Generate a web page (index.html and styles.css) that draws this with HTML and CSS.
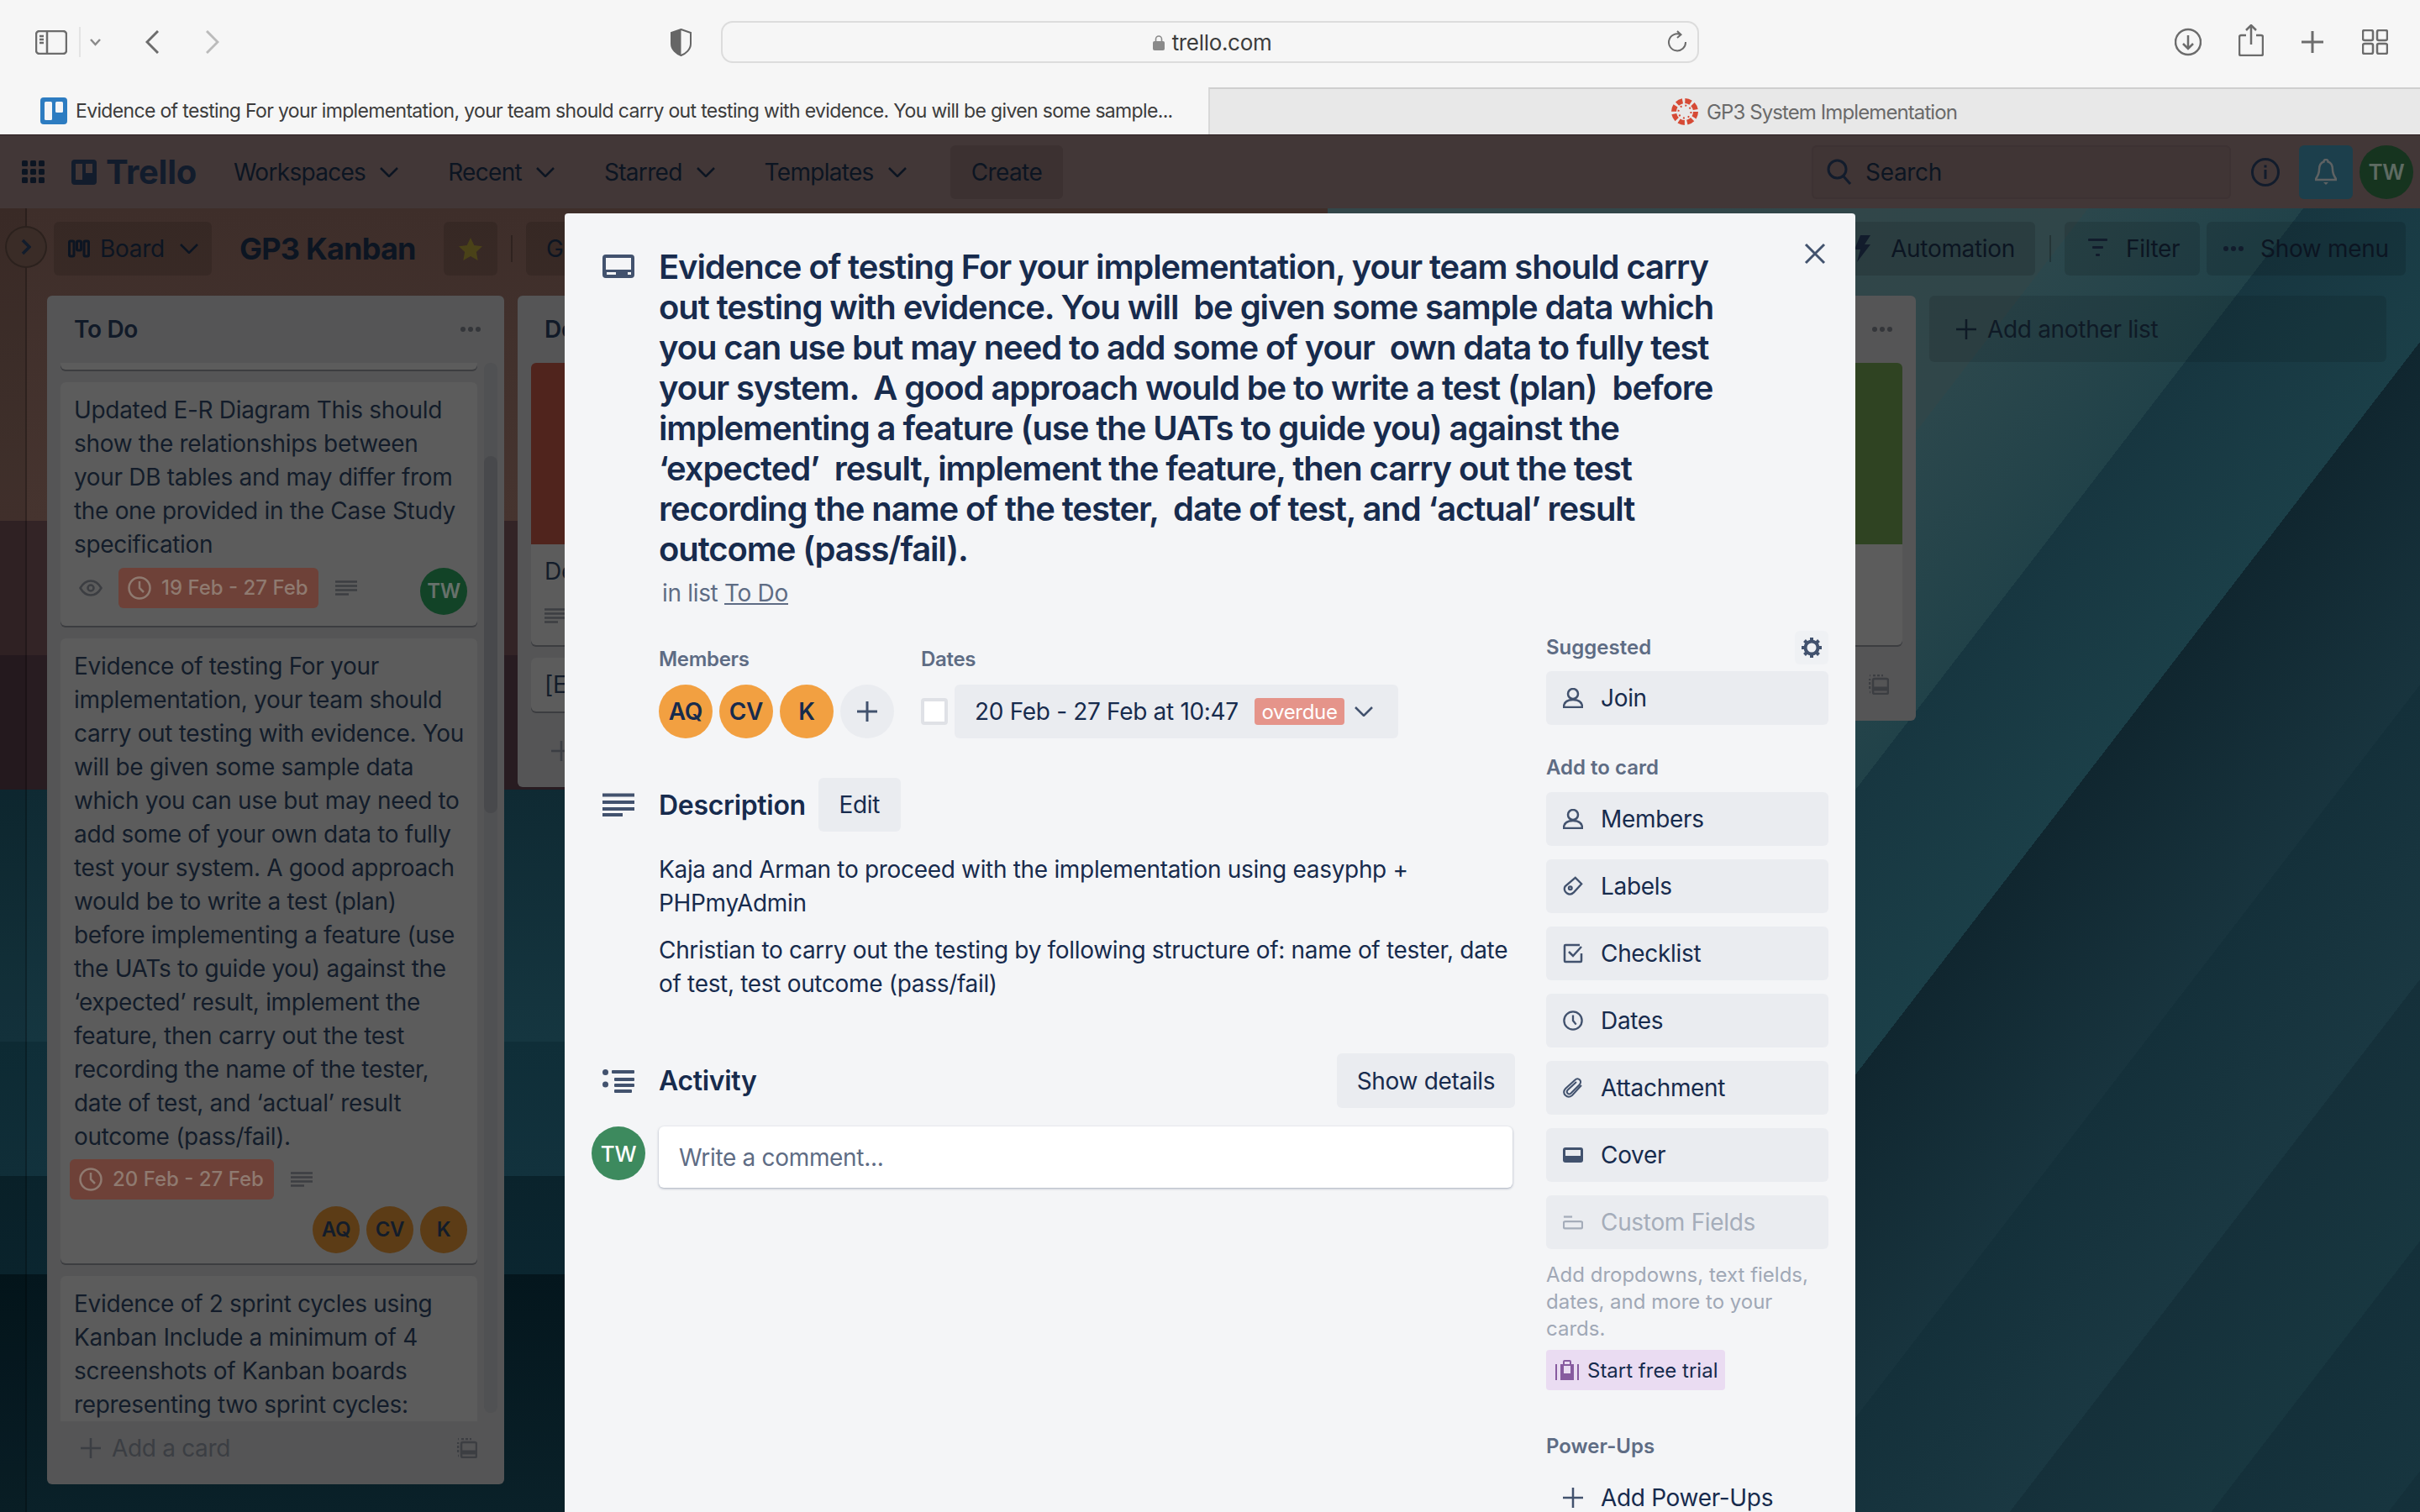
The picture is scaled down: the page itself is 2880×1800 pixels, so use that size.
FILE: index.html
```html
<!DOCTYPE html>
<html lang="en">
<head>
    <meta charset="UTF-8">
    <title>Evidence of testing | Trello</title>
    <link rel="stylesheet" href="styles.css">
</head>
<body>
    <!-- Safari toolbar -->
    <div class="toolbar">
        <svg class="ti ti-sidebar" viewBox="0 0 38 29"><rect x="1" y="1" width="36" height="27" rx="4"/><path d="M14 1v27M5 7h5M5 11h5M5 15h5"/></svg>
        <span class="ti-sep"></span>
        <svg class="ti ti-chev" viewBox="0 0 13 9"><path d="M1 1l5.5 6L12 1"/></svg>
        <svg class="ti ti-back" viewBox="0 0 16 28"><path d="M15 1L2 14l13 13"/></svg>
        <svg class="ti ti-forward" viewBox="0 0 16 28"><path d="M1 1l13 13L1 27"/></svg>
        <svg class="ti-shield" viewBox="0 0 27 33"><path d="M13.5 1L25 5v13c0 7-6 12-11.5 14C8 30 2 25 2 18V5z" fill="none" stroke="#666" stroke-width="2"/><path d="M13.5 1L2 5v13c0 7 6 12 11.5 14z" fill="#666"/></svg>
        <div class="urlbar">
            <svg class="lock" viewBox="0 0 14 19"><path d="M3.5 9V5.5a3.5 3.5 0 0 1 7 0V9" fill="none" stroke="#8a8a8a" stroke-width="1.6"/><rect y="8" width="14" height="11" rx="2" fill="#8a8a8a"/></svg>
            <span>trello.com</span>
            <svg class="ti ti-reload" viewBox="0 0 24 26"><path d="M15 5.2A10 10 0 1 0 21 14M11 1l4.5 4.2L11 9"/></svg>
        </div>
        <div class="toolbar-right">
            <svg class="ti ti-download" viewBox="0 0 32 34"><circle cx="16" cy="17" r="15"/><path d="M16 9v16M10 19l6 6 6-6"/></svg>
            <svg class="ti ti-share" viewBox="0 0 30 38"><path d="M9 13H3a2 2 0 0 0-2 2v20a2 2 0 0 0 2 2h24a2 2 0 0 0 2-2V15a2 2 0 0 0-2-2h-6M15 24V2M9 7l6-6 6 6"/></svg>
            <svg class="ti ti-plus" viewBox="0 0 28 28"><path d="M14 1v26M1 14h26"/></svg>
            <svg class="ti ti-tabs" viewBox="0 0 31 30"><rect x="1" y="1" width="12" height="12" rx="2"/><rect x="18" y="1" width="12" height="12" rx="2"/><rect x="1" y="17" width="12" height="12" rx="2"/><rect x="18" y="17" width="12" height="12" rx="2"/></svg>
        </div>
    </div>

    <div class="tabs">
        <div class="tab tab-active">
            <svg class="favicon" viewBox="0 0 32 32"><rect width="32" height="32" rx="4" fill="#2d7cc1"/><rect x="5" y="5" width="9" height="22" rx="1.5" fill="#f4f5f7"/><rect x="18" y="5" width="9" height="13" rx="1.5" fill="#f4f5f7"/></svg>
            <span>Evidence of testing For your implementation, your team should carry out testing with evidence. You will be given some sample...</span>
        </div>
        <div class="tab tab-other">
            <svg class="favicon" viewBox="0 0 32 32" fill="none" stroke="#d64a35"><circle cx="16" cy="16" r="13" stroke-width="6" stroke-dasharray="7.2 3"/><circle cx="16" cy="16" r="7.5" stroke-width="2" stroke-dasharray="2 3.9"/></svg>
            <span>GP3 System Implementation</span>
        </div>
    </div>

    <div class="app">
        <!-- Trello header -->
        <header class="topbar">
            <svg class="grid-icon" viewBox="0 0 27 27"><g fill="#0c1522"><rect width="7" height="7" rx="1.5"/><rect x="10" width="7" height="7" rx="1.5"/><rect x="20" width="7" height="7" rx="1.5"/><rect y="10" width="7" height="7" rx="1.5"/><rect x="10" y="10" width="7" height="7" rx="1.5"/><rect x="20" y="10" width="7" height="7" rx="1.5"/><rect y="20" width="7" height="7" rx="1.5"/><rect x="10" y="20" width="7" height="7" rx="1.5"/><rect x="20" y="20" width="7" height="7" rx="1.5"/></g></svg>
            <svg class="logo-mark" viewBox="0 0 30 30"><path fill="#121c2c" fill-rule="evenodd" d="M4 0h22a4 4 0 0 1 4 4v22a4 4 0 0 1-4 4H4a4 4 0 0 1-4-4V4a4 4 0 0 1 4-4zm1 5v19h8V5zm12 0v11h8V5z"/></svg>
            <span class="logo-text">Trello</span>
            <nav class="topnav">
                <span class="navitem">Workspaces <svg class="dn" viewBox="0 0 22 12"><path d="M1 1l10 10L21 1"/></svg></span>
                <span class="navitem">Recent <svg class="dn" viewBox="0 0 22 12"><path d="M1 1l10 10L21 1"/></svg></span>
                <span class="navitem">Starred <svg class="dn" viewBox="0 0 22 12"><path d="M1 1l10 10L21 1"/></svg></span>
                <span class="navitem">Templates <svg class="dn" viewBox="0 0 22 12"><path d="M1 1l10 10L21 1"/></svg></span>
            </nav>
            <span class="create-btn">Create</span>
            <div class="search">
                <svg class="search-icon" viewBox="0 0 30 32"><circle cx="12.5" cy="12.5" r="10.5"/><path d="M20 21l8 9"/></svg>
                <span>Search</span>
            </div>
            <svg class="info-icon" viewBox="0 0 34 34"><circle cx="17" cy="17" r="15.5" fill="none" stroke="#121c2c" stroke-width="3"/><rect x="15.5" y="14" width="3" height="11" fill="#121c2c"/><rect x="15.5" y="8.500" width="3" height="3" fill="#121c2c"/></svg>
            <span class="bell-btn"><svg viewBox="0 0 26 32"><path d="M13 1c1.500 0 2.500 1 2.500 2.500C20 5 21 9 21 13c0 5 2 8 4 11v1H1v-1c2-3 4-6 4-11 0-4 1-8 5.500-9.500C10.500 2 11.500 1 13 1z" fill="none" stroke="#5e6263" stroke-width="2.500"/><path d="M10 28h6l-3 3z" fill="#5e6263"/></svg></span>
            <span class="avatar-top">TW</span>
        </header>

        <div class="board">
            <div class="side-strip">
                <span class="side-toggle"><svg viewBox="0 0 12 20"><path d="M2 2l8 8-8 8" fill="none" stroke="#121c2c" stroke-width="3.500"/></svg></span>
            </div>
            <div class="board-main">
                <div class="boardbar">
                    <span class="bar-btn bar-board">
                        <svg class="board-icon" viewBox="0 0 26 26" fill="none" stroke="#0c1522" stroke-width="3"><rect x="1.500" y="4" width="5.500" height="18" rx="1.500"/><rect x="10.500" y="4" width="5" height="11" rx="1.500"/><rect x="19" y="4" width="5.500" height="18" rx="1.500"/></svg>
                        Board
                        <svg class="dn" viewBox="0 0 22 12"><path d="M1 1l10 10L21 1"/></svg>
                    </span>
                    <h1 class="board-title">GP3 Kanban</h1>
                    <span class="bar-btn bar-star"><svg viewBox="0 0 28 27"><path d="M14 0l4.300 9 9.700 1.200-7.100 6.700 1.800 10L14 22l-8.700 4.900 1.800-10L0 10.200 9.700 9z" fill="#4a4218"/></svg></span>
                    <span class="bar-sep"></span>
                    <span class="bar-btn bar-workspace">G</span>
                    <div class="bar-right">
                        <span class="bar-btn bar-auto">
                            <svg class="bolt" viewBox="0 0 22 32"><path d="M10 0h12l-7 11h7L6 32l4-15H3z" fill="#121c2c"/></svg>
                            Automation
                        </span>
                        <span class="bar-sep"></span>
                        <span class="bar-btn bar-filter">
                            <svg class="filter-icon" viewBox="0 0 23 24"><g fill="#121c2c"><rect width="23" height="3" rx="1"/><rect x="5" y="9" width="13" height="3" rx="1"/><rect x="9" y="18" width="5" height="3" rx="1"/></g></svg>
                            Filter
                        </span>
                        <span class="bar-btn bar-menu">
                            <span class="dots dots-bar"><i></i><i></i><i></i></span>
                            Show menu
                        </span>
                    </div>
                </div>

                <div class="lists">
                    <!-- To Do -->
                    <section class="list">
                        <div class="list-head"><span>To Do</span><span class="dots"><i></i><i></i><i></i></span></div>
                        <div class="list-body todo-body">
                            <div class="cards">
                                <div class="card card-tail"></div>
                                <div class="card">
                                    <p>Updated E-R Diagram This should show the relationships between your DB tables and may differ from the one provided in the Case Study specification</p>
                                    <div class="badges">
                                        <svg class="eye" viewBox="0 0 28 20" fill="none" stroke="#3c3e42" stroke-width="2.500"><path d="M1.500 10C5 4 9 1.500 14 1.500S23 4 26.500 10C23 16 19 18.500 14 18.500S5 16 1.500 10z"/><circle cx="14" cy="10" r="3.500"/></svg>
                                        <span class="due">
                                            <svg class="due-clock" viewBox="0 0 28 28"><circle cx="14" cy="14" r="12.500"/><path d="M14 6v8l5 5"/></svg>
                                            19 Feb - 27 Feb
                                        </span>
                                        <svg class="desc-badge" viewBox="0 0 26 18"><path d="M0 1.500h26M0 6.500h26M0 11.500h26M0 16.500h16"/></svg>
                                        <span class="card-avatar card-avatar-tw">TW</span>
                                    </div>
                                </div>
                                <div class="card">
                                    <p>Evidence of testing For your implementation, your team should carry out testing with evidence. You will be given some sample data which you can use but may need to add some of your own data to fully test your system. A good approach would be to write a test (plan) before implementing a feature (use the UATs to guide you) against the ‘expected’ result, implement the feature, then carry out the test recording the name of the tester, date of test, and ‘actual’ result outcome (pass/fail).</p>
                                    <div class="badges badges-tight">
                                        <span class="due">
                                            <svg class="due-clock" viewBox="0 0 28 28"><circle cx="14" cy="14" r="12.500"/><path d="M14 6v8l5 5"/></svg>
                                            20 Feb - 27 Feb
                                        </span>
                                        <svg class="desc-badge" viewBox="0 0 26 18"><path d="M0 1.500h26M0 6.500h26M0 11.500h26M0 16.500h16"/></svg>
                                    </div>
                                    <div class="card-members">
                                        <span class="card-avatar">AQ</span>
                                        <span class="card-avatar">CV</span>
                                        <span class="card-avatar">K</span>
                                    </div>
                                </div>
                                <div class="card card-last">
                                    <p>Evidence of 2 sprint cycles using Kanban Include a minimum of 4 screenshots of Kanban boards representing two sprint cycles:</p>
                                </div>
                            </div>
                            <div class="scroll-track"><div class="scroll-thumb"></div></div>
                        </div>
                        <div class="list-foot">
                            <span class="add-card"><svg class="plus" viewBox="0 0 24 24"><path d="M12 0v24M0 12h24"/></svg>Add a card</span>
                            <svg class="tpl-icon" viewBox="0 0 24 24" fill="none" stroke="#3c3e42" stroke-width="2.500"><path d="M1 17V5M5 1h12M1 1h1M1 21h1" stroke-dasharray="3 2"/><rect x="5" y="5" width="18" height="18" rx="2"/><path d="M5 17h18" stroke-width="5"/></svg>
                        </div>
                    </section>

                    <!-- Doing -->
                    <section class="list">
                        <div class="list-head"><span>Doing</span></div>
                        <div class="cards cards-full">
                            <div class="card card-cover">
                                <div class="cover cover-red"></div>
                                <p>De</p>
                                <svg class="desc-badge desc-cover" viewBox="0 0 26 18"><path d="M0 1.500h26M0 6.500h26M0 11.500h26M0 16.500h16"/></svg>
                            </div>
                            <div class="card card-short"><p>[E</p></div>
                        </div>
                        <div class="list-foot">
                            <span class="add-card"><svg class="plus" viewBox="0 0 24 24"><path d="M12 0v24M0 12h24"/></svg></span>
                        </div>
                    </section>

                    <!-- hidden behind the modal -->
                    <section class="list list-empty"></section>

                    <!-- Done -->
                    <section class="list">
                        <div class="list-head list-head-end"><span class="dots"><i></i><i></i><i></i></span></div>
                        <div class="cards cards-full">
                            <div class="card card-cover">
                                <div class="cover cover-green"></div>
                            </div>
                        </div>
                        <div class="list-foot list-foot-right">
                            <svg class="tpl-icon" viewBox="0 0 24 24" fill="none" stroke="#3c3e42" stroke-width="2.500"><path d="M1 17V5M5 1h12M1 1h1M1 21h1" stroke-dasharray="3 2"/><rect x="5" y="5" width="18" height="18" rx="2"/><path d="M5 17h18" stroke-width="5"/></svg>
                        </div>
                    </section>

                    <div class="add-list"><svg class="plus plus-dark" viewBox="0 0 24 24"><path d="M12 0v24M0 12h24"/></svg>Add another list</div>
                </div>
            </div>
        </div>

        <!-- Card detail -->
        <div class="modal">
            <svg class="close" viewBox="0 0 26 26"><path d="M2 2l22 22M24 2L2 24"/></svg>
            <div class="modal-head">
                <svg class="sec-icon cover-icon" viewBox="0 0 38 28"><path fill="#42526e" fill-rule="evenodd" d="M4 0h30a4 4 0 0 1 4 4v20a4 4 0 0 1-4 4H4a4 4 0 0 1-4-4V4a4 4 0 0 1 4-4zm0 4v14h30V4zm1 17v3h11v-3zm25 0v3h4v-3z"/></svg>
                <div>
                    <h2 class="card-title">Evidence of testing For your implementation, your team should carry<br>out testing with evidence. You will &nbsp;be given some sample data which<br>you can use but may need to add some of your &nbsp;own data to fully test<br>your system. &nbsp;A good approach would be to write a test (plan) &nbsp;before<br>implementing a feature (use the UATs to guide you) against the<br>‘expected’ &nbsp;result, implement the feature, then carry out the test<br>recording the name of the tester, &nbsp;date of test, and ‘actual’ result<br>outcome (pass/fail).</h2>
                    <p class="in-list">in list <u>To Do</u></p>
                </div>
            </div>

            <div class="modal-columns">
                <div class="modal-main">
                    <div class="meta">
                        <div class="meta-block">
                            <h3>Members</h3>
                            <div class="member-row">
                                <span class="member">AQ</span>
                                <span class="member">CV</span>
                                <span class="member">K</span>
                                <span class="member member-add"><svg class="plus plus-modal" viewBox="0 0 24 24"><path d="M12 0v24M0 12h24"/></svg></span>
                            </div>
                        </div>
                        <div class="meta-block">
                            <h3>Dates</h3>
                            <div class="date-row">
                                <span class="checkbox"></span>
                                <span class="date-btn">20 Feb - 27 Feb at 10:47 <span class="overdue">overdue</span><svg class="dn dn-date" viewBox="0 0 22 12"><path d="M1 1l10 10L21 1"/></svg></span>
                            </div>
                        </div>
                    </div>

                    <div class="section-head desc-head">
                        <svg class="sec-icon" viewBox="0 0 38 28"><path d="M0 2.500h38M0 11h38M0 19h38M0 26h24" stroke="#42526e" stroke-width="4"/></svg>
                        <h3 class="section-title">Description</h3>
                        <span class="btn-grey btn-edit">Edit</span>
                    </div>
                    <div class="desc-text">
                        <p>Kaja and Arman to proceed with the implementation using easyphp + PHPmyAdmin</p>
                        <p>Christian to carry out the testing by following structure of: name of tester, date of test, test outcome (pass/fail)</p>
                    </div>

                    <div class="section-head activity-head">
                        <svg class="sec-icon" viewBox="0 0 38 28"><g fill="#42526e"><circle cx="3.500" cy="3.500" r="3.500"/><circle cx="3.500" cy="18" r="3.500"/><rect x="11" y="1" width="27" height="4" rx="1"/><rect x="14" y="10" width="24" height="4" rx="1"/><rect x="14" y="17" width="24" height="4" rx="1"/><rect x="14" y="24" width="21" height="4" rx="1"/></g></svg>
                        <h3 class="section-title">Activity</h3>
                        <span class="btn-grey btn-details">Show details</span>
                    </div>
                    <div class="comment-row">
                        <span class="comment-avatar">TW</span>
                        <div class="comment-box">Write a comment...</div>
                    </div>
                </div>

                <aside class="modal-side">
                    <div class="side-label-row">
                        <h3>Suggested</h3>
                        <span class="gear"><svg viewBox="0 0 24 24"><circle cx="12" cy="12" r="7.500" fill="none" stroke="#42526e" stroke-width="4"/><path d="M12 0v5M12 19v5M0 12h5M19 12h5M3.500 3.500L7 7M17 17l3.500 3.500M20.500 3.500L17 7M7 17l-3.500 3.500" stroke="#42526e" stroke-width="4"/></svg></span>
                    </div>
                    <div class="side-btn">
                        <svg class="side-icon" viewBox="0 0 24 24"><circle cx="12" cy="7" r="6"/><path d="M1 23c0-6 4-9 11-9s11 3 11 9z"/></svg>Join
                    </div>

                    <h3 class="side-label">Add to card</h3>
                    <div class="side-group">
                        <div class="side-btn"><svg class="side-icon" viewBox="0 0 24 24"><circle cx="12" cy="7" r="6"/><path d="M1 23c0-6 4-9 11-9s11 3 11 9z"/></svg>Members</div>
                        <div class="side-btn"><svg class="side-icon" viewBox="0 0 26 26"><path d="M16 2l8 8-10 11c-3 3-6 3-9 1s-4-6-2-9z"/><circle cx="9.500" cy="15.500" r="2"/></svg>Labels</div>
                        <div class="side-btn"><svg class="side-icon" viewBox="0 0 24 24"><path d="M20 2H3a1 1 0 0 0-1 1v18a1 1 0 0 0 1 1h18a1 1 0 0 0 1-1V12M7 10l5 5 10-11"/></svg>Checklist</div>
                        <div class="side-btn"><svg class="side-icon" viewBox="0 0 26 26"><circle cx="13" cy="13" r="11.500"/><path d="M13 6v7l4 5"/></svg>Dates</div>
                        <div class="side-btn"><svg class="side-icon side-clip" viewBox="0 0 24 24"><path d="M22 9L11 21c-3 2.500-6 2-8 0s-2.500-5 0-8L14 3c2-2 4.500-2 6-.5s1.500 4-.5 6L9.500 18.500c-1.500 1.300-3 1-4 0s-1-2.500.3-4L16 5"/></svg>Attachment</div>
                        <div class="side-btn"><svg class="side-icon side-icon-fill" viewBox="0 0 24 18"><path fill-rule="evenodd" d="M3 0h18a3 3 0 0 1 3 3v12a3 3 0 0 1-3 3H3a3 3 0 0 1-3-3V3a3 3 0 0 1 3-3zm0 3v7h18V3z"/></svg>Cover</div>
                        <div class="side-btn side-btn-off"><svg class="side-icon" viewBox="0 0 26 18"><path d="M1 2h11"/><rect x="1" y="8" width="24" height="9" rx="2"/></svg>Custom Fields</div>
                    </div>
                    <p class="side-help">Add dropdowns, text fields, dates, and more to your cards.</p>
                    <span class="trial"><svg class="trial-icon" viewBox="0 0 28 24" fill="#875b9f"><path fill-rule="evenodd" d="M9 5V2a2 2 0 0 1 2-2h6a2 2 0 0 1 2 2v3h3v19H6V5zm2-3v3h6V2zm-1 5v9h8V7z"/><rect y="5" width="2" height="19"/><rect x="26" y="5" width="2" height="19"/></svg>Start free trial</span>

                    <h3 class="side-label side-label-power">Power-Ups</h3>
                    <div class="side-btn side-btn-plain"><svg class="side-icon side-plus" viewBox="0 0 24 24"><path d="M12 0v24M0 12h24"/></svg>Add Power-Ups</div>
                </aside>
            </div>
        </div>
    </div>
</body>
</html>
```

FILE: styles.css
```css
* {
    box-sizing: border-box;
}
html, body {
    margin: 0;
    height: 1800px;
    overflow: hidden;
}
body {
    font-family: Inter, 'Liberation Sans', sans-serif;
    font-size: 28px;
    letter-spacing: -0.32px;
    background-color: #f6f6f6;
    color: #172b4d;
}
p, h1, h2, h3 {
    margin: 0;
}

/* Safari chrome */
.toolbar {
    height: 104px;
    display: flex;
    align-items: center;
    padding: 0 38px 4px 42px;
    background-color: #f6f6f6;
}
.ti {
    fill: none;
    stroke: #6c6c6c;
    stroke-width: 2.5;
    flex: none;
}
.ti-sidebar { width: 38px; height: 29px; }
.ti-sep {
    width: 2px;
    height: 36px;
    margin-left: 14px;
    background-color: #e3e3e3;
}
.ti-chev { width: 13px; height: 9px; margin-left: 11px; stroke: #8a8a8a; }
.ti-back { width: 16px; height: 28px; margin-left: 53px; stroke-width: 3; }
.ti-forward { width: 16px; height: 28px; margin-left: 56px; stroke: #bbb; stroke-width: 3; }
.ti-shield { width: 27px; height: 33px; margin-left: 536px; flex: none; }
.urlbar {
    width: 1164px;
    height: 50px;
    margin-left: 34px;
    padding-left: 5px;
    display: flex;
    align-items: center;
    justify-content: center;
    position: relative;
    border: 2px solid #dcdcdc;
    border-radius: 14px;
    font-size: 26px;
    color: #3c3c3c;
}
.lock {
    width: 14px;
    height: 19px;
    margin-right: 9px;
}
.ti-reload {
    position: absolute;
    right: 11px;
    top: 9px;
    width: 24px;
    height: 26px;
    stroke-width: 2;
}
.toolbar-right {
    margin-left: auto;
    display: flex;
    align-items: center;
}
.ti-download { width: 32px; height: 34px; }
.ti-share { width: 30px; height: 38px; margin-left: 44px; margin-top: -4px; }
.ti-plus { width: 28px; height: 28px; margin-left: 44px; stroke-width: 3; }
.ti-tabs { width: 31px; height: 30px; margin-left: 45px; }

.tabs {
    height: 56px;
    display: flex;
    font-size: 24px;
}
.tab {
    display: flex;
    align-items: center;
}
.tab-active {
    width: 1438px;
    padding-left: 48px;
    color: #3c3c3c;
    background-color: #f6f6f6;
    white-space: nowrap;
    font-size: 23px;
    letter-spacing: -0.66px;
}
.tab-other {
    flex: 1;
    justify-content: center;
    padding-right: 2px;
    color: #6a6a6a;
    background-color: #e8e8e8;
    border-top: 2px solid #cfcfcf;
    border-left: 2px solid #d8d8d8;
    letter-spacing: -0.9px;
}
.favicon {
    width: 32px;
    height: 32px;
    margin-right: 10px;
    flex: none;
}

/* Trello page, everything is dimmed by the open card */
.app {
    height: 1640px;
    position: relative;
    overflow: hidden;
    border-top: 1px solid #2a1c1e;
}
.topbar {
    height: 87px;
    display: flex;
    align-items: center;
    padding: 0 8px 0 26px;
    background-color: #423737;
    color: #0c1522;
}
.grid-icon { width: 27px; height: 27px; flex: none; }
.logo-mark { width: 30px; height: 30px; margin-left: 32px; flex: none; }
.logo-text {
    margin-left: 11px;
    font-size: 40px;
    font-weight: 700;
    color: #121c2c;
}
.topnav {
    display: flex;
    margin-left: 44px;
    gap: 59px;
    letter-spacing: -0.7px;
}
.navitem {
    display: flex;
    align-items: center;
    gap: 17px;
    white-space: nowrap;
}
.dn {
    width: 22px;
    height: 12px;
    fill: none;
    stroke: #0c1522;
    stroke-width: 2.5;
    flex: none;
}
.create-btn {
    height: 64px;
    margin-left: 52px;
    padding: 0 25px;
    display: flex;
    align-items: center;
    border-radius: 6px;
    background-color: #3c3131;
    letter-spacing: -0.6px;
}
.search {
    width: 499px;
    height: 64px;
    margin-left: auto;
    padding-left: 16px;
    display: flex;
    align-items: center;
    gap: 16px;
    border: 2px solid #3d3233;
    border-radius: 6px;
    background-color: #403535;
}
.search-icon {
    width: 30px;
    height: 32px;
    fill: none;
    stroke: #121c2c;
    stroke-width: 3;
}
.info-icon { width: 34px; height: 34px; margin-left: 24px; flex: none; }
.bell-btn {
    width: 64px;
    height: 64px;
    margin-left: 23px;
    display: flex;
    align-items: center;
    justify-content: center;
    border-radius: 6px;
    background-color: #1c3f4c;
}
.bell-btn svg { width: 26px; height: 32px; }
.avatar-top {
    width: 64px;
    height: 64px;
    margin-left: 8px;
    display: flex;
    align-items: center;
    justify-content: center;
    border-radius: 50%;
    background-color: #16341f;
    color: #5e6b62;
    font-size: 26px;
    font-weight: 600;
}

.board {
    height: 1552px;
    display: flex;
    background-color: #0a2129;
    background-image:
        linear-gradient(127.6deg,
            #334649 0, #304649 717px,
            #2b474c 717px, #214249 920px,
            #173640 920px, #1b3f48 1127px,
            #10262f 1127px, #18343e 1376px,
            #14303a 1376px, #1a3842 1590px,
            #15303a 1590px, #183740 1780px,
            #14303a 1780px, #17353f 1947px,
            #14303a 1947px, #16323c 2200px),
        linear-gradient(to bottom,
            #3e2e2a 0, #46342f 372px,
            #332426 372px, #332426 532px,
            #281c21 532px, #281c21 692px,
            #0f2a33 692px, #153640 992px,
            #0f2e38 992px, #12323d 1152px,
            #0a232c 1152px, #0b2630 1269px,
            #04161d 1269px, #0a2129 1552px);
    background-size: 1300px 100%, 100% 100%;
    background-position: right top, left top;
    background-repeat: no-repeat;
}
.side-strip {
    width: 32px;
    flex: none;
    position: relative;
    border-right: 2px solid rgba(0, 0, 0, 0.25);
    background-color: rgba(0, 0, 0, 0.08);
}
.side-toggle {
    position: absolute;
    left: 6px;
    top: 21px;
    width: 50px;
    height: 50px;
    display: flex;
    align-items: center;
    justify-content: center;
    border: 2px solid rgba(0, 0, 0, 0.25);
    border-radius: 50%;
    background-color: #3a2c27;
}
.side-toggle svg { width: 12px; height: 20px; }
.board-main {
    flex: 1;
    min-width: 0;
}
.boardbar {
    height: 104px;
    padding: 16px 17px 24px 32px;
    display: flex;
    align-items: center;
    color: #0c1522;
}
.bar-btn {
    height: 64px;
    display: flex;
    align-items: center;
    border-radius: 6px;
    background-color: rgba(0, 0, 0, 0.12);
    white-space: nowrap;
}
.bar-board {
    width: 188px;
    padding-left: 17px;
    gap: 12px;
}
.bar-board .dn { margin-left: 6px; }
.board-icon { width: 26px; height: 26px; }
.board-title {
    width: 210px;
    margin-left: 33px;
    font-size: 36px;
    font-weight: 700;
    letter-spacing: -0.8px;
    white-space: nowrap;
}
.bar-star {
    width: 64px;
    margin-left: 33px;
    justify-content: center;
}
.bar-star svg { width: 28px; height: 27px; }
.bar-sep {
    width: 2px;
    height: 32px;
    margin: 0 16px;
    background-color: rgba(0, 0, 0, 0.25);
}
.bar-workspace {
    width: 60px;
    padding-left: 24px;
}
.bar-right {
    margin-left: auto;
    display: flex;
    align-items: center;
}
.bar-auto {
    padding: 0 24px;
    gap: 24px;
}
.bolt { width: 22px; height: 32px; }
.bar-filter {
    width: 161px;
    padding-left: 28px;
    gap: 22px;
}
.filter-icon { width: 23px; height: 24px; }
.bar-menu {
    width: 237px;
    margin-left: 8px;
    padding-left: 20px;
    gap: 20px;
}
.bar-right .bar-sep { margin: 0 16px 0 17px; }

/* Lists */
.lists {
    margin-left: 24px;
    display: flex;
    align-items: flex-start;
    gap: 16px;
}
.list {
    width: 544px;
    flex: none;
    border-radius: 6px;
    background-color: #555556;
    color: #111a28;
}
.list-empty { height: 400px; }
.list-head {
    height: 80px;
    padding: 0 28px 0 32px;
    display: flex;
    align-items: center;
    justify-content: space-between;
    font-weight: 600;
}
.list-head-end { justify-content: flex-end; }
.dots {
    display: flex;
    gap: 3px;
}
.dots i {
    width: 6px;
    height: 6px;
    border-radius: 50%;
    background-color: #34363a;
}
.dots-bar i { background-color: #121c2c; }
.list-body {
    display: flex;
}
.todo-body {
    height: 1260px;
    overflow: hidden;
    padding-left: 16px;
}
.cards {
    width: 496px;
    flex: none;
    display: flex;
    flex-direction: column;
    gap: 15px;
}
.cards-full {
    margin: 0 16px 15px;
    width: 512px;
}
.card {
    padding: 13px 16px;
    flex: none;
    border-radius: 6px;
    background-color: #5c5c5c;
    box-shadow: 0 2px 0 #3c3d40;
    line-height: 40px;
    color: #131c2a;
}
.card-tail {
    height: 8px;
    padding: 0;
    border-radius: 0 0 6px 6px;
}
.card-short {
    height: 64px;
    padding-top: 12px;
}
.card-last {
    height: 200px;
    border-radius: 6px 6px 0 0;
}
.badges {
    height: 56px;
    margin: 8px -4px 0 0;
    display: flex;
    align-items: flex-start;
    position: relative;
}
.badges-tight {
    height: 48px;
    margin: 7px 0 8px -5px;
}
.eye {
    width: 28px;
    height: 20px;
    margin: 14px 0 0 6px;
}
.due {
    height: 48px;
    padding: 0 12px 0 11px;
    margin-left: 19px;
    display: flex;
    align-items: center;
    gap: 12px;
    border-radius: 6px;
    background-color: #6e4138;
    color: #8f7a70;
    font-size: 24px;
    font-weight: 500;
    letter-spacing: 0;
}
.badges-tight .due { margin-left: 0; }
.due-clock {
    width: 28px;
    height: 28px;
    fill: none;
    stroke: #8f7a70;
    stroke-width: 2.5;
}
.desc-badge {
    width: 26px;
    height: 18px;
    margin: 15px 0 0 20px;
    fill: none;
    stroke: #3c3e42;
    stroke-width: 2.5;
}
.card-avatar {
    width: 56px;
    height: 56px;
    display: flex;
    align-items: center;
    justify-content: center;
    border-radius: 50%;
    background-color: #5c3c16;
    color: #131c2a;
    font-size: 24px;
    font-weight: 600;
}
.card-avatar-tw {
    position: absolute;
    right: 0;
    top: 0;
    background-color: #124327;
    color: #67716b;
}
.card-members {
    margin: 0 -4px -1px 0;
    display: flex;
    justify-content: flex-end;
    gap: 8px;
}
.card-cover {
    height: 336px;
    padding: 0 16px;
}
.cover {
    height: 216px;
    margin: 0 -16px 12px;
    border-radius: 6px 6px 0 0;
}
.cover-red { background-color: #50241d; }
.cover-green { background-color: #2f4322; }
.desc-cover {
    display: block;
    margin: 24px 0 0;
}
.scroll-track {
    width: 16px;
    height: 1250px;
    margin-left: 8px;
    border-radius: 8px;
    background-color: #505153;
}
.scroll-thumb {
    height: 425px;
    margin-top: 111px;
    border-radius: 8px;
    background-color: #48494c;
}
.list-foot {
    height: 75px;
    padding: 0 32px 12px 40px;
    display: flex;
    align-items: center;
    justify-content: space-between;
    color: #3b3e43;
}
.list-foot-right { justify-content: flex-end; }
.add-card {
    display: flex;
    align-items: center;
    gap: 13px;
}
.plus {
    width: 24px;
    height: 24px;
    fill: none;
    stroke: #3b3e43;
    stroke-width: 2.5;
    flex: none;
}
.plus-dark { stroke: #0f1a26; }
.tpl-icon { width: 24px; height: 24px; }
.add-list {
    width: 544px;
    height: 79px;
    padding-left: 32px;
    flex: none;
    display: flex;
    align-items: center;
    gap: 13px;
    border-radius: 6px;
    background-color: rgba(0, 0, 0, 0.1);
    color: #0f1a26;
}

/* Card detail */
.modal {
    position: absolute;
    left: 672px;
    top: 93px;
    width: 1536px;
    height: 1600px;
    padding: 40px 32px 0 45px;
    border-radius: 4px;
    background-color: #f4f5f7;
}
.close {
    position: absolute;
    right: 35px;
    top: 35px;
    width: 26px;
    height: 26px;
    fill: none;
    stroke: #42526e;
    stroke-width: 3;
}
.modal-head {
    display: flex;
    gap: 29px;
}
.sec-icon {
    width: 38px;
    height: 28px;
    flex: none;
}
.cover-icon { margin-top: 9px; }
.card-title {
    font-size: 40px;
    line-height: 48px;
    font-weight: 600;
    letter-spacing: -1.1px;
    color: #172b4d;
    white-space: nowrap;
}
.in-list {
    margin: 8px 0 0 4px;
    line-height: 40px;
    color: #5e6c84;
}
.modal-columns {
    margin-top: 43px;
    display: flex;
}
.modal-main {
    width: 1087px;
    flex: none;
}
.meta {
    display: flex;
    padding-left: 67px;
    gap: 32px;
}
.meta h3,
.modal-side h3 {
    font-size: 24px;
    line-height: 32px;
    font-weight: 600;
    color: #5e6c84;
}
.modal-side h3 { letter-spacing: 0; }
.member-row {
    margin-top: 14px;
    display: flex;
    gap: 8px;
}
.member {
    width: 64px;
    height: 64px;
    display: flex;
    align-items: center;
    justify-content: center;
    border-radius: 50%;
    background-color: #f2a041;
    font-weight: 600;
}
.member-add { background-color: #eaecf0; }
.plus-modal { stroke: #42526e; stroke-width: 3; }
.date-row {
    margin-top: 14px;
    display: flex;
    align-items: center;
    gap: 8px;
}
.checkbox {
    width: 32px;
    height: 32px;
    border: 4px solid #dfe1e6;
    border-radius: 4px;
    background-color: #fff;
}
.date-btn {
    width: 528px;
    height: 64px;
    padding-left: 24px;
    display: flex;
    align-items: center;
    border-radius: 6px;
    background-color: #eaecf0;
    white-space: pre;
}
.overdue {
    height: 32px;
    margin-left: 12px;
    padding: 0 8px;
    display: flex;
    align-items: center;
    border-radius: 4px;
    background-color: #e5948a;
    color: #fff;
    font-size: 24px;
}
.dn-date { margin-left: 12px; stroke: #42526e; }
.section-head {
    display: flex;
    align-items: center;
    padding-right: 2px;
}
.desc-head { margin-top: 47px; }
.section-title {
    margin-left: 29px;
    font-size: 32px;
    font-weight: 600;
}
.btn-grey {
    height: 64px;
    display: flex;
    align-items: center;
    justify-content: center;
    border-radius: 6px;
    background-color: #eaecf0;
}
.btn-edit {
    width: 98px;
    margin-left: 15px;
}
.desc-text {
    margin: 25px 0 0 67px;
    line-height: 40px;
}
.desc-text p + p { margin-top: 16px; }
.activity-head { margin-top: 63px; }
.btn-details {
    width: 212px;
    height: 65px;
    margin-left: auto;
    margin-right: -1px;
}
.comment-row {
    margin-top: 22px;
    display: flex;
    gap: 16px;
    margin-left: -13px;
}
.comment-avatar {
    width: 64px;
    height: 64px;
    display: flex;
    align-items: center;
    justify-content: center;
    border-radius: 50%;
    background-color: #3d8a5e;
    color: #fff;
    font-size: 26px;
    font-weight: 500;
}
.comment-box {
    width: 1016px;
    height: 73px;
    padding-left: 24px;
    display: flex;
    align-items: center;
    border-radius: 6px;
    background-color: #fff;
    box-shadow: 0 1px 3px rgba(9, 30, 66, 0.35);
    color: #5e6c84;
}
.modal-side {
    width: 336px;
    flex: none;
    margin-left: 36px;
    margin-top: -18px;
}
.side-label-row {
    height: 40px;
    margin-bottom: 8px;
    display: flex;
    align-items: center;
    justify-content: space-between;
}
.gear {
    width: 40px;
    height: 40px;
    display: flex;
    align-items: center;
    justify-content: center;
    border-radius: 6px;
    background-color: #eff1f4;
}
.gear svg { width: 24px; height: 24px; }
.side-btn {
    height: 64px;
    padding-left: 20px;
    display: flex;
    align-items: center;
    gap: 21px;
    border-radius: 6px;
    background-color: #eaecf0;
}
.side-icon {
    width: 24px;
    height: 24px;
    fill: none;
    stroke: #42526e;
    stroke-width: 2.5;
    flex: none;
}
.side-clip { stroke-width: 2; }
.side-icon-fill { fill: #42526e; stroke: none; }
.modal-side .side-label {
    margin-top: 35px;
    margin-bottom: 13px;
}
.side-group {
    display: flex;
    flex-direction: column;
    gap: 16px;
}
.side-btn-off {
    color: #a5adba;
}
.side-btn-off .side-icon { stroke: #a5adba; }
.side-help {
    margin-top: 15px;
    font-size: 24px;
    line-height: 32px;
    letter-spacing: 0;
    color: #a0a8b6;
}
.trial {
    width: 213px;
    height: 48px;
    margin-top: 9px;
    padding-left: 11px;
    display: flex;
    align-items: center;
    gap: 10px;
    border-radius: 4px;
    background-color: #eadcf2;
    font-size: 24px;
    letter-spacing: 0;
}
.trial-icon { width: 28px; height: 24px; flex: none; }
.modal-side .side-label-power {
    margin-top: 51px;
    margin-bottom: 13px;
}
.side-btn-plain { background: none; }
```
